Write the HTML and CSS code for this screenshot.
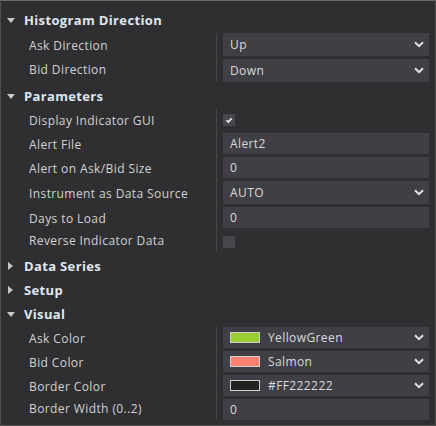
FILE: index.html
```html
<!DOCTYPE html>
<html lang="en">
<head>
  <meta charset="UTF-8" />
  <title>Indicator Properties</title>
  <link rel="stylesheet" href="styles.css">
</head>
<body>

  <div class="panel">

    <!-- Histogram Direction -->
    <div class="group">
      <div class="group-head"><span class="caret open"></span>Histogram Direction</div>
      <div class="group-body">
        <div class="label">Ask Direction</div>
        <div class="value">
          <div class="field select tall"><span>Up</span>
            <svg class="chev" viewBox="0 0 10 7"><path d="M1 1.2 L5 5.2 L9 1.2"/></svg>
          </div>
        </div>
        <div class="label">Bid Direction</div>
        <div class="value">
          <div class="field select tall"><span>Down</span>
            <svg class="chev" viewBox="0 0 10 7"><path d="M1 1.2 L5 5.2 L9 1.2"/></svg>
          </div>
        </div>
      </div>
    </div>

    <!-- Parameters -->
    <div class="group">
      <div class="group-head"><span class="caret open"></span>Parameters</div>
      <div class="group-body">
        <div class="label">Display Indicator GUI</div>
        <div class="value">
          <div class="check-wrap">
            <span class="check">
              <svg viewBox="0 0 12 12"><path d="M3.5 6.2 L5.3 8 L8.6 4.4"/></svg>
            </span>
          </div>
        </div>
        <div class="label">Alert File</div>
        <div class="value"><div class="field"><span>Alert2</span></div></div>
        <div class="label">Alert on Ask/Bid Size</div>
        <div class="value"><div class="field"><span>0</span></div></div>
        <div class="label">Instrument as Data Source</div>
        <div class="value">
          <div class="field select tall"><span>AUTO</span>
            <svg class="chev" viewBox="0 0 10 7"><path d="M1 1.2 L5 5.2 L9 1.2"/></svg>
          </div>
        </div>
        <div class="label">Days to Load</div>
        <div class="value"><div class="field"><span>0</span></div></div>
        <div class="label">Reverse Indicator Data</div>
        <div class="value">
          <div class="check-wrap"><span class="check"></span></div>
        </div>
      </div>
    </div>

    <!-- Data Series -->
    <div class="group">
      <div class="group-head"><span class="caret"></span>Data Series</div>
    </div>

    <!-- Setup -->
    <div class="group">
      <div class="group-head"><span class="caret"></span>Setup</div>
    </div>

    <!-- Visual -->
    <div class="group">
      <div class="group-head"><span class="caret open"></span>Visual</div>
      <div class="group-body">
        <div class="label">Ask Color</div>
        <div class="value">
          <div class="field select">
            <i class="swatch" style="background:#9acd32"></i><span>YellowGreen</span>
            <svg class="chev" viewBox="0 0 10 7"><path d="M1 1.2 L5 5.2 L9 1.2"/></svg>
          </div>
        </div>
        <div class="label">Bid Color</div>
        <div class="value">
          <div class="field select">
            <i class="swatch" style="background:#fa8072"></i><span>Salmon</span>
            <svg class="chev" viewBox="0 0 10 7"><path d="M1 1.2 L5 5.2 L9 1.2"/></svg>
          </div>
        </div>
        <div class="label">Border Color</div>
        <div class="value">
          <div class="field select">
            <i class="swatch" style="background:#222222"></i><span>#FF222222</span>
            <svg class="chev" viewBox="0 0 10 7"><path d="M1 1.2 L5 5.2 L9 1.2"/></svg>
          </div>
        </div>
        <div class="label">Border Width (0..2)</div>
        <div class="value"><div class="field"><span>0</span></div></div>
      </div>
    </div>

  </div>

</body>
</html>
```

FILE: styles.css
```css
* {
  box-sizing: border-box;
}

html, body {
  margin: 0;
  padding: 0;
  background-color: #2f2f31;
  font-family: "Open Sans", "Liberation Sans", sans-serif;
  font-size: 12px;
  letter-spacing: 0.4px;
  color: #d2d2d2;
}

/* Property grid container */
.panel {
  width: 436px;
  height: 426px;
  border: 1px solid #505052;
  border-top-color: #6a6a6c;
  padding-top: 7px;
  background-color: #2f2f31;
  overflow: hidden;
}

/* Category header */
.group-head {
  height: 24px;
  display: flex;
  align-items: center;
  font-weight: bold;
  font-size: 13px;
  letter-spacing: 0.35px;
  color: #dfe6ef;
}

.caret {
  width: 23px;
  display: flex;
  justify-content: center;
  padding-right: 4px;
}

.caret::before {
  content: "";
  border-style: solid;
  border-color: transparent;
  border-width: 4.5px 0 4.5px 5px;
  border-left-color: #c8c8c8;
}

.caret.open::before {
  border-width: 5px 4px 0 4px;
  border-color: #c8c8c8 transparent transparent transparent;
}

/* Rows */
.group-body {
  display: grid;
  grid-template-columns: 216px 1fr;
  padding: 1px 0 2px;
}

.label {
  padding-left: 28px;
  border-right: 1px solid #47474a;
  display: flex;
  align-items: center;
  padding-bottom: 2px;
  white-space: nowrap;
}

.value {
  padding: 0 6px 3px 6px;
}

.group-body > .label:last-of-type,
.group-body > .value:last-child {
  padding-bottom: 0;
}

.field {
  height: 21px;
  background-color: #403f45;
  display: flex;
  align-items: center;
  padding: 0 5px 0 7px;
  color: #dadada;
}

.field.tall {
  height: 23px;
}

.field span {
  flex: 1;
}

.chev {
  width: 10px;
  height: 7px;
  fill: none;
  stroke: #e2e2e2;
  stroke-width: 2;
}

.swatch {
  width: 30px;
  height: 11px;
  border: 1px solid #cfcfcf;
  margin-right: 8px;
}

/* Checkbox */
.check-wrap {
  height: 21px;
  display: flex;
  align-items: center;
}

.check {
  width: 12px;
  height: 12px;
  background-color: #48474d;
  display: block;
}

.check svg {
  width: 12px;
  height: 12px;
  display: block;
  fill: none;
  stroke: #f0f0f0;
  stroke-width: 1.6;
}
```
